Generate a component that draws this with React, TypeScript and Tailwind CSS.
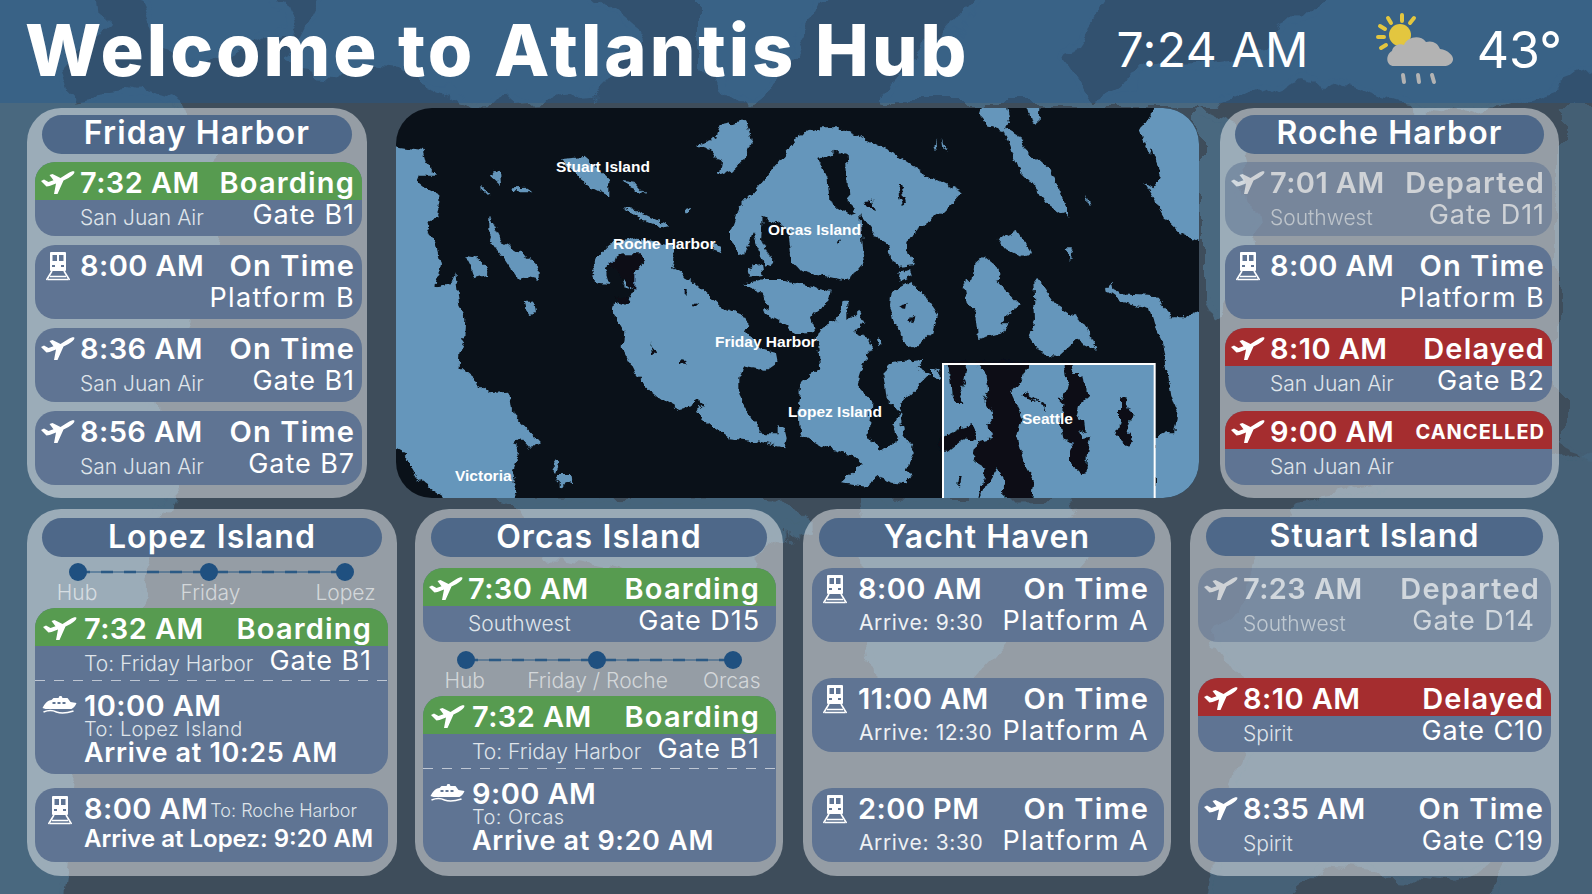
import React from 'react';

const LAND = [
  // west shore
  'M-30 120 80 135 90 175 120 212 72 212 65 230 90 250 130 270 130 295 115 340 95 365 120 420 135 480 130 510 118 520 115 545 165 535 178 505 185 560 190 605 208 635 205 700 190 745 188 785 230 820 280 865 340 860 350 930 395 975 435 1018 405 1032 375 1000 355 1015 372 1040 350 1100 365 1165 345 1200 180 1200 120 1160 60 1120 25 1060 35 1050 -30 1015Z',
  // stuart + neighbours
  'M495 162 565 155 595 180 640 225 640 275 590 250 545 215Z',
  'M680 225 715 230 750 270 700 250Z',
  'M680 310 720 315 770 340 818 360 790 366 740 345Z',
  'M866 312 885 305 880 322 868 322Z',
  'M905 120 960 100 975 60 1050 45 1067 105 1040 165 1010 195 968 213 975 170 950 135Z',
  'M280 335 320 415 350 430 400 460 428 490 428 525 390 515 370 530 340 485 280 395Z',
  'M205 450 240 455 272 485 270 510 235 520 225 490Z',
  'M350 250 395 248 412 262 350 262Z',
  'M295 195 312 198 315 240 285 212Z',
  'M255 245 280 270 275 275 258 258Z',
  'M380 590 415 590 420 625 400 630 385 610Z',
  'M480 1065 492 1075 480 1100 465 1085Z',
  'M480 1110 530 1110 532 1130 495 1145 475 1125Z',
  // san juan
  'M640 420 720 400 830 420 838 450 828 490 880 520 930 565 965 600 1040 630 1060 660 1050 680 1085 730 1140 745 1145 770 1110 795 1040 780 1030 820 1030 870 1065 940 1100 985 1145 985 1145 960 1165 970 1172 1000 1165 1030 1090 1010 1000 1000 960 975 915 940 905 915 925 900 905 885 890 905 850 915 800 885 760 855 720 810 680 730 685 680 650 620 655 590 695 600 710 550 680 540 690 510 740 480 735 458 690 460 680 490 650 470 625 490 640 540 600 535 585 500 600 460Z',
  'M950 415 975 425 982 445 950 435Z',
  // orcas
  'M1005 380 1030 310 1100 230 1140 180 1212 85 1272 70 1332 70 1412 105 1502 150 1592 210 1697 262 1662 300 1642 320 1597 350 1557 375 1532 415 1547 465 1557 480 1512 485 1487 470 1477 420 1452 405 1402 340 1362 300 1352 150 1317 140 1267 165 1292 220 1297 290 1362 330 1392 320 1402 440 1407 470 1382 500 1342 525 1272 510 1212 495 1190 470 1185 420 1180 380 1140 350 1100 335 1095 400 1130 470 1105 485 1070 385 1050 445 1030 450 1005 420Z',
  'M1055 490 1095 478 1100 510 1060 515Z',
  // shaw
  'M1040 540 1100 525 1170 525 1220 540 1260 550 1307 560 1300 590 1260 620 1245 640 1255 680 1200 690 1170 660 1130 640 1100 620 1120 610 1090 560Z',
  // lopez
  'M1337 590 1357 590 1357 645 1387 620 1402 650 1372 680 1417 700 1432 725 1407 760 1382 840 1427 890 1417 990 1452 1040 1507 1000 1492 960 1512 920 1472 880 1462 800 1492 770 1587 762 1562 790 1597 810 1517 890 1512 920 1522 990 1557 1040 1532 1090 1547 1110 1532 1135 1492 1130 1452 1115 1412 1145 1332 1135 1382 1090 1397 1075 1372 1050 1272 1020 1212 985 1206 900 1212 850 1230 820 1270 790 1262 700 1272 670 1320 650Z',
  'M1440 705 1450 695 1457 720 1447 730Z',
  // blakely
  'M1487 560 1542 530 1592 575 1627 625 1612 680 1552 735 1532 725 1507 670 1492 650 1482 600Z',
  'M1512 500 1542 490 1547 510 1507 530Z',
  // cypress and east
  'M1702 540 1727 520 1732 480 1762 452 1797 480 1817 520 1802 525 1877 605 1832 630 1812 655 1842 655 1822 685 1747 705 1737 625 1712 590Z',
  'M1802 405 1862 378 1897 430 1902 445 1872 455 1822 430Z',
  'M1912 530 1932 525 1982 600 2072 660 2102 735 2042 705 1992 750 1932 745 1902 700 1917 640Z',
  'M1747 30 1762 -20 1827 -20 1842 50 1827 70 1862 90 1892 135 1962 195 2002 280 2017 338 1952 295 1902 225 1862 185 1842 130 1822 75 1772 60Z',
  'M1887 -20 1932 -20 1927 60 1907 55Z',
  'M2067 265 2082 305 2072 300Z',
  'M1617 100 1622 135 1612 130Z',
  'M1637 95 1652 140 1642 130Z',
  'M2002 430 2027 430 2034 445 2022 465Z',
  'M1605 790 1630 800 1632 820 1605 815Z',
  // mainland
  'M2232 80 2262 30 2287 -20 2440 -20 2440 1200 2277 1200 2277 1000 2307 985 2337 985 2347 930 2327 880 2302 720 2282 680 2262 610 2177 590 2127 555 2147 530 2152 555 2172 565 2272 570 2297 600 2332 640 2362 640 2440 600 2440 420 2352 385 2312 345 2272 275 2247 235 2272 250 2297 215 2272 150 2267 125 2262 150Z',
];

const WATER = [
  // san juan inlets
  'M640 470 680 445 735 445 745 470 715 510 715 555 690 535 670 500 650 490Z',
  'M655 575 700 585 690 600 665 590Z',
  'M890 595 905 598 905 608 888 606Z',
  'M855 760 865 762 865 780 855 778Z',
  'M763 715 772 735 778 748 768 745Z',
  'M866 555 875 555 875 572 866 570Z',
  // orcas
  'M1505 240 1516 240 1530 295 1520 300Z',
  'M1408 285 1425 282 1440 315 1415 305Z',
  'M1325 410 1340 405 1330 420Z',
  // blakely
  'M1510 605 1535 590 1530 612 1515 610Z',
  'M1530 650 1555 635 1552 655Z',
  // seattle inset
  'M1652 770 1717 770 1707 830 1692 870 1702 900 1687 900 1667 870 1662 810Z',
  'M1737 770 1902 770 1872 830 1844 868 1877 940 1862 1000 1882 1070 1915 1130 1907 1200 1827 1200 1822 1120 1802 1090 1777 1130 1747 1200 1762 1120 1772 1095 1732 1070 1742 1010 1782 1000 1797 985 1767 960 1792 925 1767 880 1777 860 1772 810Z',
  'M1630 1000 1692 970 1727 960 1742 990 1737 1005 1702 1000 1652 1040 1630 1040Z',
  'M2002 770 2022 770 2032 810 2062 810 2072 880 2052 900 2042 940 2067 950 2072 985 2047 975 2062 1000 2082 995 2072 1060 2072 1100 2057 1105 2022 1075 2022 1040 2037 1010 2002 1000 1992 950 2002 900 1982 880 2002 885 2012 840Z',
  'M2172 880 2187 880 2207 935 2192 980 2217 1010 2202 1025 2162 990 2172 950Z',
  'M1692 1110 1698 1110 1692 1148 1686 1145Z',
  'M1882 860 1950 900 1945 915 1935 895 1880 870Z',
];

const MAP_LABELS = [
  { t: 'Stuart Island', c: 'left-[160px] top-[50px]' },
  { t: 'Roche Harbor', c: 'left-[217px] top-[127px]' },
  { t: 'Orcas Island', c: 'left-[372px] top-[113px]' },
  { t: 'Friday Harbor', c: 'left-[319px] top-[225px]' },
  { t: 'Lopez Island', c: 'left-[392px] top-[295px]' },
  { t: 'Seattle', c: 'left-[626px] top-[302px]' },
  { t: 'Victoria', c: 'left-[59px] top-[359px]' },
];

const Plane = () => (
  <svg viewBox="0 0 34 24" className="w-[35px] h-[24px]" fill="currentColor">
    <path d="M0.5 11 3.5 9.5 8 12 13 10.3 9 5 12 4 20 8 28 3C31 1 34 .5 34 2 34 4 31 6 28 8L23 10.5 17 24 13.5 24 15.5 13.5 9 16 6 16.5Z" />
  </svg>
);

const Train = () => (
  <svg viewBox="0 0 24 30" className="w-[24px] h-[30px] mt-[3px]" fill="currentColor">
    <path
      fillRule="evenodd"
      d="M5 1H19Q20 1 20 2V19Q20 20 19 20H5Q4 20 4 19V2Q4 1 5 1ZM6.5 4V10H11V4ZM13 4V10H17.5V4ZM6 14V16H9V14ZM15 14V16H18V14Z"
    />
    <path d="M6 20 .5 29M18 20 23.5 29M4 25.5H20M2 28.5H22" stroke="currentColor" strokeWidth="1.6" fill="none" />
  </svg>
);

const Ferry = () => (
  <svg viewBox="0 0 34 20" className="w-[35px] h-[20px]" fill="currentColor">
    <path
      fillRule="evenodd"
      d="M0 13C2 9 5 5 9 5L11 3H16L17 1H19L20 3H25L28 7 34 8C33 11 31 13 29 14H3ZM10 7V9H13V7ZM15 7V9H18V7ZM20 7V9H23V7Z"
    />
    <path d="M1 17C6 15 10 15 14 17 19 19 25 18 31 16" stroke="currentColor" strokeWidth="1.6" fill="none" />
  </svg>
);

const ICONS = { plane: <Plane />, train: <Train />, ferry: <Ferry /> };

type IconName = keyof typeof ICONS;

const HEAD = {
  plain: '',
  green: 'bg-[#579b50]',
  red: 'bg-[#a52d2f]',
};

const Head = ({ icon, time, status, tone = 'plain', lead = 'w-[45px]', pr = 'pr-[7px]', statusClass = 'text-[29px] font-semibold tracking-[0.04em]' }: {
  icon: IconName; time: string; status: string; tone?: keyof typeof HEAD; lead?: string; pr?: string; statusClass?: string;
}) => (
  <div className={`flex items-center h-[38px] pt-[3px] ${pr} ${HEAD[tone]}`}>
    <div className={`${lead} shrink-0 flex justify-center mt-[-2px]`}>{ICONS[icon]}</div>
    <span className="text-[29px] font-semibold tracking-[0.015em] leading-none">{time}</span>
    <span className={`ml-auto leading-none ${statusClass}`}>{status}</span>
  </div>
);

const Sub = ({ left, right, lead = 'pl-[45px]', pr = 'pr-[7px]', h = 'h-[36px]', rightClass = 'tracking-[0.035em]' }: {
  left?: string; right?: string; lead?: string; pr?: string; h?: string; rightClass?: string;
}) => (
  <div className={`flex items-start ${h} ${pr} ${lead}`}>
    <span className="text-[21px] font-light text-[#dfe4ea] leading-[36px]">{left}</span>
    <span className={`ml-auto text-[27px] leading-[30px] ${rightClass}`}>{right}</span>
  </div>
);

const Card = ({ children, className = '' }: { children: React.ReactNode; className?: string }) => (
  <div className={`rounded-[20px] bg-[#5f7493] overflow-hidden text-white ${className}`}>{children}</div>
);

const Panel = ({ title, className, pill, children }: { title: string; className: string; pill: string; children: React.ReactNode }) => (
  <section className={`rounded-[34px] bg-white/45 flex flex-col shrink-0 ${className}`}>
    <div className={`h-[39px] rounded-full bg-[#4e6889] flex items-center justify-center text-white text-[32px] font-semibold tracking-[0.035em] leading-none ${pill}`}>
      {title}
    </div>
    {children}
  </section>
);

const Route = ({ labels, top }: { labels: string[]; top: string }) => (
  <div className={`h-[50px] flex flex-col ${top}`}>
    <svg viewBox="0 0 370 20" className="w-[370px] h-[20px]">
      <line x1="51" y1="10" x2="318" y2="10" stroke="#2b5a85" strokeWidth="1" />
      <line x1="51" y1="10" x2="318" y2="10" stroke="#2b5a85" strokeWidth="2.5" strokeDasharray="12 11" />
      <circle cx="51" cy="10" r="9" fill="#1f5080" />
      <circle cx="182" cy="10" r="9" fill="#1f5080" />
      <circle cx="318" cy="10" r="9" fill="#1f5080" />
    </svg>
    <div className="flex text-[21px] font-light text-white/60 leading-[26px] mt-[-2px]">
      <span className="w-[100px] text-center">{labels[0]}</span>
      <span className="w-[167px] text-center whitespace-nowrap">{labels[1]}</span>
      <span className="w-[103px] text-center">{labels[2]}</span>
    </div>
  </div>
);

const Boat = ({ time, to, arrive, lead }: { time: string; to: string; arrive: string; lead: string }) => (
  <div className="flex pt-[8px]">
    <div className={`${lead} shrink-0 flex justify-center pt-[6px]`}><Ferry /></div>
    <div className="flex flex-col">
      <span className="text-[29px] font-semibold tracking-[0.015em] leading-[34px]">{time}</span>
      <span className="text-[20px] font-light text-[#dfe4ea] leading-[14px] mt-[-1px] tracking-[0.02em]">{to}</span>
      <span className="text-[27px] font-semibold tracking-[0.025em] leading-[32px] mt-[1px] whitespace-nowrap">{arrive}</span>
    </div>
  </div>
);

const Dash = () => (
  <div className="h-[1px] bg-[repeating-linear-gradient(90deg,rgba(255,255,255,0.6)_0_10px,transparent_10px_19px)]" />
);

const Platform = ({ time, arrive, platform }: { time: string; arrive: string; platform: string }) => (
  <Card className="h-[74px]">
    <Head icon="train" time={time} status="On Time" lead="w-[46px]" pr="pr-[15px]" />
    <div className="flex items-start pl-[47px] pr-[15px]">
      <span className="text-[21px] leading-[34px] tracking-[0.03em] text-[#eef1f4]">Arrive: {arrive}</span>
      <span className="ml-auto text-[27px] leading-[30px] tracking-[0.05em]">{platform}</span>
    </div>
  </Card>
);

export default function App() {
  return (
    <div className="relative w-[1592px] h-[894px] overflow-hidden bg-[#3e4d5b] font-['Inter','Noto_Sans',sans-serif] text-white">
      {/* faint chart behind everything */}
      <svg viewBox="0 0 1592 894" className="absolute inset-0 w-full h-full" fill="#48677f">
        <defs>
          <filter id="chart" x="-50" y="-50" width="1700" height="1000" filterUnits="userSpaceOnUse">
            <feTurbulence type="fractalNoise" baseFrequency="0.018" numOctaves="4" seed="4" />
            <feDisplacementMap in="SourceGraphic" scale="46" xChannelSelector="R" yChannelSelector="G" />
          </filter>
        </defs>
        <g filter="url(#chart)" stroke="#48677f" strokeWidth="6" strokeLinejoin="round">
          <path d="M-30 -30H92L100 30 60 60 70 100 130 92 190 110 215 190 190 300 150 380 170 500 120 640 80 760 60 920H-30Z" />
          <path d="M130 -30H262L285 30 230 60 150 40Z" />
          <path d="M285 60 330 -30H560L640 40 590 95 480 103 400 70Z" />
          <path d="M700 -30H840L790 60 740 103 700 60Z" />
          <path d="M880 103 1000 -30H1120L1060 60 1090 103 1160 70 1230 60 1290 30 1350 -30H1620V60L1540 90 1470 110 1400 103 1300 70 1220 103Z" />
          <path d="M1199 110 1240 130 1260 260 1210 320 1199 300Z" />
          <path d="M1300 500 1620 450V920H1480L1520 840 1440 880 1320 870 1260 920H1200L1260 700 1220 640Z" opacity="0.8" />
          <path d="M1560 110H1620V460L1560 440Z" opacity="0.7" />
          <path d="M500 500 770 498 800 530 680 580 560 560Z" opacity="0.9" />
          <path d="M860 500 1060 498 1080 560 960 690 880 680Z" opacity="0.9" />
        </g>
      </svg>

      <header className="relative h-[103px] bg-[#1e5a96]/35 flex items-center pl-[25px] pr-[30px] pb-[4px]">
        <h1 className="text-[72px] font-extrabold tracking-[0.041em] leading-none whitespace-nowrap">Welcome to Atlantis Hub</h1>
        <span className="ml-auto text-[48px] leading-none tracking-[0.01em]">7:24 AM</span>
        <svg viewBox="0 0 80 75" className="w-[80px] h-[75px] ml-[67px]">
          <g stroke="#e3c63f" strokeWidth="4" strokeLinecap="round">
            <path d="M26 3V9M12 6 15 11M38 6 34 11M4 14 9 17M2 25H8M5 36 10 33" />
          </g>
          <circle cx="24" cy="23" r="11" fill="#e3c63f" />
          <path d="M18 54C10 54 9 43 16 39 17 33 24 31 28 33 31 25 44 22 50 30 56 28 62 31 64 37 72 38 78 44 77 48 76 52 72 54 68 54Z" fill="#b3b3b3" />
          <g stroke="#b3b3b3" strokeWidth="4" strokeLinecap="round">
            <path d="M27 63 28 70M42 63 43 70M56 63 58 70" />
          </g>
        </svg>
        <span className="ml-[21px] text-[50px] leading-none">43°</span>
      </header>

      <main className="relative">
        <div className="flex items-start pt-[5px]">
          <Panel title="Friday Harbor" className="w-[340px] h-[390px] ml-[27px] pt-[7px]" pill="mx-[15px] pb-[4px]">
            <div className="flex flex-col gap-[9px] pl-[8px] pr-[5px] mt-[8px]">
              <Card className="h-[74px]"><Head icon="plane" time="7:32 AM" status="Boarding" tone="green" /><Sub left="San Juan Air" right="Gate B1" /></Card>
              <Card className="h-[74px]"><Head icon="train" time="8:00 AM" status="On Time" /><Sub right="Platform B" rightClass="tracking-[0.05em]" /></Card>
              <Card className="h-[74px]"><Head icon="plane" time="8:36 AM" status="On Time" /><Sub left="San Juan Air" right="Gate B1" /></Card>
              <Card className="h-[74px]"><Head icon="plane" time="8:56 AM" status="On Time" /><Sub left="San Juan Air" right="Gate B7" /></Card>
            </div>
          </Panel>

          <div className="relative w-[803px] h-[390px] ml-[29px] rounded-[36px] overflow-hidden bg-[#0a1119] shrink-0">
            <svg viewBox="0 9 2409 1170" preserveAspectRatio="none" className="w-full h-full">
              <defs>
                <filter id="coast" x="-50" y="-50" width="2520" height="1300" filterUnits="userSpaceOnUse">
                  <feTurbulence type="fractalNoise" baseFrequency="0.035" numOctaves="4" seed="7" />
                  <feDisplacementMap in="SourceGraphic" scale="26" xChannelSelector="R" yChannelSelector="G" />
                </filter>
              </defs>
              <g filter="url(#coast)" fill="#6596bb">
                {LAND.map((d, i) => <path key={i} d={d} />)}
              </g>
              <rect x="1642" y="777" width="634" height="403" fill="#6596bb" />
              <g filter="url(#coast)" fill="#0a1119">
                {WATER.map((d, i) => <path key={i} d={d} />)}
              </g>
              <path d="M1641 1180V777H2276V1180" fill="none" stroke="#fff" strokeWidth="6" />
            </svg>
            {MAP_LABELS.map(l => (
              <span key={l.t} className={`absolute ${l.c} font-['Liberation_Sans',sans-serif] font-bold text-[15.5px] leading-[18px] whitespace-nowrap`}>{l.t}</span>
            ))}
          </div>

          <Panel title="Roche Harbor" className="w-[339px] h-[390px] ml-[21px] pt-[7px]" pill="mx-[15px] pb-[4px]">
            <div className="flex flex-col gap-[9px] pl-[5px] pr-[7px] mt-[8px]">
              <Card className="h-[74px] opacity-[0.55]"><Head icon="plane" time="7:01 AM" status="Departed" /><Sub left="Southwest" right="Gate D11" /></Card>
              <Card className="h-[74px]"><Head icon="train" time="8:00 AM" status="On Time" /><Sub right="Platform B" rightClass="tracking-[0.05em]" /></Card>
              <Card className="h-[74px]"><Head icon="plane" time="8:10 AM" status="Delayed" tone="red" /><Sub left="San Juan Air" right="Gate B2" /></Card>
              <Card className="h-[74px]"><Head icon="plane" time="9:00 AM" status="CANCELLED" tone="red" statusClass="text-[20px] font-bold tracking-[0.05em]" /><Sub left="San Juan Air" /></Card>
            </div>
          </Panel>
        </div>

        <div className="flex items-start mt-[11px]">
          <Panel title="Lopez Island" className="w-[370px] h-[367px] ml-[27px] pt-[9px]" pill="mx-[15px] pb-[2px]">
            <Route labels={['Hub', 'Friday', 'Lopez']} top="mt-[5px]" />
            <div className="pl-[8px] pr-[9px] mt-[-4px] flex flex-col">
              <Card className="h-[166px]">
                <Head icon="plane" time="7:32 AM" status="Boarding" tone="green" lead="w-[49px]" pr="pr-[16px]" />
                <Sub left="To: Friday Harbor" right="Gate B1" lead="pl-[49px]" pr="pr-[16px]" h="h-[34px]" />
                <Dash />
                <Boat time="10:00 AM" to="To: Lopez Island" arrive="Arrive at 10:25 AM" lead="w-[49px]" />
              </Card>
              <Card className="h-[74px] mt-[14px]">
                <div className="flex items-center h-[40px]">
                  <div className="w-[49px] shrink-0 flex justify-center"><Train /></div>
                  <span className="text-[29px] font-semibold tracking-[0.015em] leading-none">8:00 AM</span>
                  <span className="ml-[2px] mt-[6px] text-[18px] font-light text-[#dfe4ea] leading-none">To: Roche Harbor</span>
                </div>
                <div className="pl-[49px] text-[24px] font-semibold leading-[22px] whitespace-nowrap">Arrive at Lopez: 9:20 AM</div>
              </Card>
            </div>
          </Panel>

          <Panel title="Orcas Island" className="w-[368px] h-[367px] ml-[18px] pt-[9px]" pill="mx-[16px] pb-[2px]">
            <div className="pl-[8px] pr-[7px] mt-[11px]">
              <Card className="h-[74px]"><Head icon="plane" time="7:30 AM" status="Boarding" tone="green" pr="pr-[16px]" /><Sub left="Southwest" right="Gate D15" pr="pr-[16px]" /></Card>
            </div>
            <Route labels={['Hub', 'Friday / Roche', 'Orcas']} top="mt-[8px]" />
            <div className="pl-[8px] pr-[7px] mt-[-4px]">
              <Card className="h-[166px]">
                <Head icon="plane" time="7:32 AM" status="Boarding" tone="green" lead="w-[49px]" pr="pr-[16px]" />
                <Sub left="To: Friday Harbor" right="Gate B1" lead="pl-[49px]" pr="pr-[16px]" h="h-[34px]" />
                <Dash />
                <Boat time="9:00 AM" to="To: Orcas" arrive="Arrive at 9:20 AM" lead="w-[49px]" />
              </Card>
            </div>
          </Panel>

          <Panel title="Yacht Haven" className="w-[368px] h-[367px] ml-[20px] pt-[9px]" pill="mx-[16px] pb-[2px]">
            <div className="flex flex-col gap-[36px] pl-[9px] pr-[7px] mt-[11px]">
              <Platform time="8:00 AM" arrive="9:30" platform="Platform A" />
              <Platform time="11:00 AM" arrive="12:30" platform="Platform A" />
              <Platform time="2:00 PM" arrive="3:30" platform="Platform A" />
            </div>
          </Panel>

          <Panel title="Stuart Island" className="w-[369px] h-[367px] ml-[19px] pt-[8px]" pill="mx-[16px] pb-[2px]">
            <div className="flex flex-col gap-[36px] pl-[8px] pr-[8px] mt-[12px]">
              <Card className="h-[74px] opacity-[0.55]"><Head icon="plane" time="7:23 AM" status="Departed" pr="pr-[11px]" /><Sub left="Southwest" right="Gate D14" pr="pr-[16px]" /></Card>
              <Card className="h-[74px]"><Head icon="plane" time="8:10 AM" status="Delayed" tone="red" /><Sub left="Spirit" right="Gate C10" /></Card>
              <Card className="h-[74px]"><Head icon="plane" time="8:35 AM" status="On Time" /><Sub left="Spirit" right="Gate C19" /></Card>
            </div>
          </Panel>
        </div>
      </main>
    </div>
  );
}
